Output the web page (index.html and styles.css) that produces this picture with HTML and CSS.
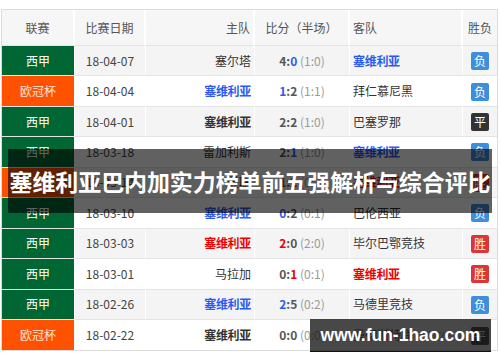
FILE: index.html
```html
<!DOCTYPE html>
<html lang="zh">
<head>
<meta charset="utf-8">
<title>塞维利亚巴内加实力榜单前五强解析与综合评比</title>
<link rel="stylesheet" href="styles.css">
</head>
<body>
<div class="page">
  <table class="matches">
    <colgroup>
      <col class="c-league"><col class="c-date"><col class="c-home"><col class="c-score"><col class="c-away"><col class="c-res">
    </colgroup>
    <thead>
      <tr>
        <th>联赛</th><th>比赛日期</th><th class="home">主队</th><th>比分（半场）</th><th class="away">客队</th><th>胜负</th>
      </tr>
    </thead>
    <tbody>
      <tr class="odd">
        <td class="lg liga">西甲</td><td class="date">18-04-07</td><td class="home">塞尔塔</td>
        <td class="score"><b>4:</b><b class="blue">0</b> <span class="ht">(1:0)</span></td>
        <td class="away"><b class="sev blue">塞维利亚</b></td><td class="res"><span class="badge lose">负</span></td>
      </tr>
      <tr>
        <td class="lg ucl">欧冠杯</td><td class="date">18-04-04</td><td class="home"><b class="sev blue">塞维利亚</b></td>
        <td class="score"><b class="blue">1</b><b>:2</b> <span class="ht">(1:1)</span></td>
        <td class="away">拜仁慕尼黑</td><td class="res"><span class="badge lose">负</span></td>
      </tr>
      <tr class="odd">
        <td class="lg liga">西甲</td><td class="date">18-04-01</td><td class="home"><b class="sev dark">塞维利亚</b></td>
        <td class="score"><b>2:2</b> <span class="ht">(1:0)</span></td>
        <td class="away">巴塞罗那</td><td class="res"><span class="badge draw">平</span></td>
      </tr>
      <tr>
        <td class="lg liga">西甲</td><td class="date">18-03-18</td><td class="home">雷加利斯</td>
        <td class="score"><b>2:</b><b class="blue">1</b> <span class="ht">(1:0)</span></td>
        <td class="away"><b class="sev blue">塞维利亚</b></td><td class="res"><span class="badge lose">负</span></td>
      </tr>
      <tr class="odd">
        <td class="lg ucl">欧冠杯</td><td class="date">18-03-14</td><td class="home">曼联</td>
        <td class="score"><b>1:</b><b class="red">2</b> <span class="ht">(0:0)</span></td>
        <td class="away"><b class="sev red">塞维利亚</b></td><td class="res"><span class="badge win">胜</span></td>
      </tr>
      <tr>
        <td class="lg liga">西甲</td><td class="date">18-03-10</td><td class="home"><b class="sev blue">塞维利亚</b></td>
        <td class="score"><b class="blue">0</b><b>:2</b> <span class="ht">(0:1)</span></td>
        <td class="away">巴伦西亚</td><td class="res"><span class="badge lose">负</span></td>
      </tr>
      <tr class="odd">
        <td class="lg liga">西甲</td><td class="date">18-03-03</td><td class="home"><b class="sev red">塞维利亚</b></td>
        <td class="score"><b class="red">2</b><b>:0</b> <span class="ht">(2:0)</span></td>
        <td class="away">毕尔巴鄂竞技</td><td class="res"><span class="badge win">胜</span></td>
      </tr>
      <tr>
        <td class="lg liga">西甲</td><td class="date">18-03-01</td><td class="home">马拉加</td>
        <td class="score"><b>0:</b><b class="red">1</b> <span class="ht">(0:1)</span></td>
        <td class="away"><b class="sev red">塞维利亚</b></td><td class="res"><span class="badge win">胜</span></td>
      </tr>
      <tr class="odd">
        <td class="lg liga">西甲</td><td class="date">18-02-26</td><td class="home"><b class="sev blue">塞维利亚</b></td>
        <td class="score"><b class="blue">2</b><b>:5</b> <span class="ht">(0:2)</span></td>
        <td class="away">马德里竞技</td><td class="res"><span class="badge lose">负</span></td>
      </tr>
      <tr>
        <td class="lg ucl">欧冠杯</td><td class="date">18-02-22</td><td class="home"><b class="sev dark">塞维利亚</b></td>
        <td class="score"><b>0:0</b> <span class="ht">(0:0)</span></td>
        <td class="away">曼彻斯特联<span class="mark">好波68网</span></td><td class="res"><span class="badge draw">平</span></td>
      </tr>
    </tbody>
  </table>

  <h1 class="title">塞维利亚巴内加实力榜单前五强解析与综合评比</h1>
  <div class="site">www.fun-1hao.com</div>
</div>
</body>
</html>
```

FILE: styles.css
```css
html, body {
  margin: 0;
  padding: 0;
  background: #fff;
}

.page {
  position: relative;
  width: 500px;
  height: 362px;
  overflow: hidden;
  font-family: "Noto Sans CJK SC", "Noto Sans", sans-serif;
  font-size: 12px;
  color: #333;
}

.matches {
  margin: 9px 0 0 1px;
  width: 497px;
  table-layout: fixed;
  border-collapse: separate;
  border-spacing: 0;
  border: 1px solid #dcdcdc;
}

.c-league { width: 73px; }
.c-date { width: 71px; }
.c-home { width: 109px; }
.c-score { width: 95px; }
.c-away { width: 113px; }
.c-res { width: 34px; }

.matches th,
.matches td {
  padding: 0;
  text-align: center;
  white-space: nowrap;
  overflow: hidden;
  border-right: 1px solid #fff;
  border-bottom: 1px solid #e4e4e4;
  line-height: 16px;
}

.matches th:last-child,
.matches td:last-child {
  border-right: 0;
}

.matches thead tr {
  height: 36px;
}

.matches th {
  background: #f6f6f6;
  font-weight: normal;
  color: #555;
  border-right: 2px solid #fff;
}

.matches tbody tr {
  height: 30.45px;
}

.matches tbody tr:last-child td {
  border-bottom: 0;
}

.matches tbody tr td {
  background: #fff;
}

.matches tbody tr.odd td {
  background: #f4f4f4;
}

.matches .home {
  text-align: right;
  padding-right: 3px;
}

.matches .away {
  text-align: left;
  padding-left: 3px;
}

.matches td.lg {
  color: #fff;
}

.matches tr td.liga,
.matches tr.odd td.liga {
  background: #006633;
}

.matches tr td.ucl,
.matches tr.odd td.ucl {
  background: #ff5200;
  color: #ffe6d9;
}

.date {
  color: #444;
}

.score b {
  font-weight: bold;
  color: #555;
}

.score .ht {
  color: #9a9a9a;
}

.sev {
  font-weight: bold;
  letter-spacing: -0.3px;
}

.blue, .score b.blue { color: #2d5bf0; }
.red, .score b.red { color: #f00000; }
.dark { color: #333; }

.mark {
  margin-left: 5px;
  color: #bbb;
  font-size: 11px;
  font-style: italic;
}

.badge {
  display: inline-block;
  width: 18px;
  height: 18px;
  line-height: 18px;
  border-radius: 2px;
  color: #fff;
  font-size: 12px;
  vertical-align: middle;
}

.badge.lose { background: #3f8edb; }
.badge.win { background: #dc3535; }
.badge.draw { background: #333; }

.title {
  position: absolute;
  left: 8px;
  top: 149px;
  width: 484px;
  height: 64px;
  margin: 0;
  background: rgba(0, 0, 0, 0.62);
  color: #fff;
  font-size: 23px;
  font-weight: bold;
  line-height: 64px;
  text-align: center;
  white-space: nowrap;
  letter-spacing: -0.1px;
}

.site {
  position: absolute;
  left: 310px;
  top: 319px;
  width: 181px;
  height: 32px;
  background: rgba(20, 20, 20, 0.78);
  border-bottom: 1px solid #111;
  color: #fff;
  font-family: "Liberation Sans", Arial, sans-serif;
  font-weight: bold;
  font-size: 17.5px;
  line-height: 33px;
  text-align: center;
}
```
